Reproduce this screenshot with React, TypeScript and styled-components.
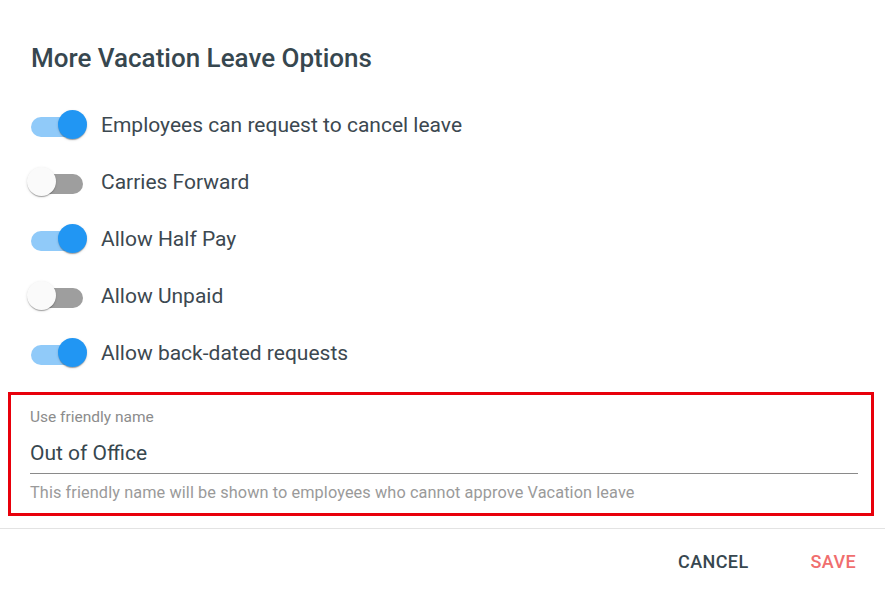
import React, { useState } from 'react';
import styled, { createGlobalStyle } from 'styled-components';

const GlobalStyle = createGlobalStyle`
  html, body {
    margin: 0;
    padding: 0;
    background: #ffffff;
    font-family: Roboto, "Liberation Sans", Arial, sans-serif;
  }
`;

const Dialog = styled.div`
  width: 885px;
  height: 593px;
  background: #fff;
  overflow: hidden;
`;

const Content = styled.div`
  padding: 41px 0 0 31px;
`;

const Title = styled.h2`
  margin: 0;
  font-size: 26px;
  line-height: 34px;
  font-weight: 500;
  color: #37474f;
`;

const OptionList = styled.ul`
  list-style: none;
  margin: 21px 0 0 -4px;
  padding: 0;
`;

const OptionRow = styled.li`
  display: flex;
  align-items: center;
  height: 57px;
  gap: 14px;
`;

const SwitchRoot = styled.button`
  position: relative;
  width: 60px;
  height: 30px;
  padding: 0;
  border: none;
  background: transparent;
  cursor: pointer;
  flex-shrink: 0;
`;

const Track = styled.span<{ checked: boolean }>`
  display: block;
  margin: 5px 0 0 4px;
  width: 52px;
  height: 20px;
  border-radius: 10px;
  background: ${(p) => (p.checked ? '#90caf9' : '#9e9e9e')};
`;

const Thumb = styled.span<{ checked: boolean }>`
  position: absolute;
  top: 0;
  left: 0;
  width: 29px;
  height: 29px;
  border-radius: 50%;
  background: ${(p) => (p.checked ? '#2196f3' : '#fafafa')};
  box-shadow: 0 2px 1px -1px rgba(0, 0, 0, 0.2), 0 1px 1px 0 rgba(0, 0, 0, 0.14),
    0 1px 3px 0 rgba(0, 0, 0, 0.12);
  transform: translateX(${(p) => (p.checked ? '31px' : '0')});
  transition: transform 150ms;
`;

const OptionText = styled.span`
  font-size: 21px;
  color: #3c4850;
`;

const FieldBox = styled.div`
  margin: 11px 11px 0 8px;
  border: 3px solid #e8000b;
  padding: 13px 13px 10px 19px;
`;

const FieldLabel = styled.label`
  display: block;
  font-size: 15.5px;
  line-height: 18px;
  color: #8c8c8c;
`;

const FieldInput = styled.input`
  display: block;
  width: 100%;
  box-sizing: content-box;
  margin: 0;
  padding: 13px 0 6px;
  height: 28px;
  border: none;
  border-bottom: 1px solid #8a8a8a;
  outline: none;
  font-family: inherit;
  font-size: 21px;
  color: #37474f;
  background: transparent;
`;

const FieldHint = styled.p`
  margin: 9px 0 0;
  font-size: 16.3px;
  line-height: 20px;
  letter-spacing: 0.1px;
  color: #9a9a9a;
`;

const Divider = styled.hr`
  margin: 12px 0 0;
  border: none;
  border-top: 1px solid #e3e3e3;
`;

const Footer = styled.div`
  display: flex;
  justify-content: flex-end;
  align-items: center;
  gap: 62px;
  padding: 21px 29px 0 0;
`;

const ActionButton = styled.button<{ primary?: boolean }>`
  border: none;
  background: transparent;
  padding: 0;
  font-family: inherit;
  font-size: 18px;
  line-height: 24px;
  font-weight: 500;
  letter-spacing: 0.4px;
  text-transform: uppercase;
  color: ${(p) => (p.primary ? '#f06e6e' : '#37474f')};
  cursor: pointer;
`;

function Toggle({ checked, onToggle }: { checked: boolean; onToggle: () => void }) {
  return (
    <SwitchRoot onClick={onToggle} role="switch" aria-checked={checked}>
      <Track checked={checked} />
      <Thumb checked={checked} />
    </SwitchRoot>
  );
}

const initialOptions = [
  { id: 1, label: 'Employees can request to cancel leave', on: true },
  { id: 2, label: 'Carries Forward', on: false },
  { id: 3, label: 'Allow Half Pay', on: true },
  { id: 4, label: 'Allow Unpaid', on: false },
  { id: 5, label: 'Allow back-dated requests', on: true },
];

export default function App() {
  const [options, setOptions] = useState(initialOptions);
  const [name, setName] = useState('Out of Office');

  const toggle = (id: number) =>
    setOptions((prev) => prev.map((o) => (o.id === id ? { ...o, on: !o.on } : o)));

  return (
    <Dialog>
      <GlobalStyle />
      <Content>
        <Title>More Vacation Leave Options</Title>
        <OptionList>
          {options.map((o) => (
            <OptionRow key={o.id}>
              <Toggle checked={o.on} onToggle={() => toggle(o.id)} />
              <OptionText>{o.label}</OptionText>
            </OptionRow>
          ))}
        </OptionList>
      </Content>
      <FieldBox>
        <FieldLabel htmlFor="friendly-name">Use friendly name</FieldLabel>
        <FieldInput id="friendly-name" value={name} onChange={(e) => setName(e.target.value)} />
        <FieldHint>This friendly name will be shown to employees who cannot approve Vacation leave</FieldHint>
      </FieldBox>
      <Divider />
      <Footer>
        <ActionButton>Cancel</ActionButton>
        <ActionButton primary>Save</ActionButton>
      </Footer>
    </Dialog>
  );
}
